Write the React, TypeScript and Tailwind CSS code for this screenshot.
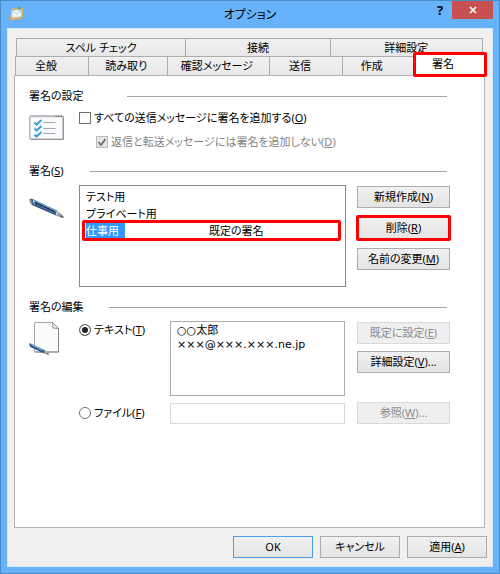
import React, { useState } from 'react';
import clsx from 'clsx';

const BACK_TABS = [
  { label: 'スペル チェック', width: 'grow-[170]' },
  { label: '接続', width: 'grow-[145]' },
  { label: '詳細設定', width: 'grow-[153]' },
];

const FRONT_TABS = [
  { label: '全般', width: 'grow-[73]', inset: 'pr-3' },
  { label: '読み取り', width: 'grow-[79]', inset: 'pr-1' },
  { label: '確認メッセージ', width: 'grow-[102]', inset: 'pr-1' },
  { label: '送信', width: 'grow-[72]', inset: 'pr-3' },
  { label: '作成', width: 'grow-[71]', inset: 'pr-3' },
  { label: '署名', width: 'grow-[73]', inset: 'pr-3' },
];

const SIGNATURES = [
  { name: 'テスト用', note: '' },
  { name: 'プライベート用', note: '' },
  { name: '仕事用', note: '既定の署名' },
];

const Label: React.FC<{ text: string; accessKey?: string; tail?: string }> = ({ text, accessKey, tail }) => (
  <span className="whitespace-nowrap">
    {text}
    {accessKey && <>(<u className="underline-offset-1">{accessKey}</u>)</>}
    {tail}
  </span>
);

type PushButtonProps = {
  text: string;
  accessKey?: string;
  tail?: string;
  disabled?: boolean;
  primary?: boolean;
  marked?: boolean;
  className?: string;
};

const PushButton: React.FC<PushButtonProps> = ({ text, accessKey, tail, disabled, primary, marked, className }) => (
  <button
    type="button"
    disabled={disabled}
    className={clsx(
      'relative flex h-[22px] items-center justify-center border',
      disabled
        ? 'border-[#d9d9d9] bg-[#efefef] text-[#8b8b8b]'
        : 'bg-linear-to-b from-[#f1f1f1] to-[#e4e4e4] text-black',
      !disabled && (primary ? 'border-[#4aa0f0]' : 'border-[#acacac]'),
      className
    )}
  >
    <Label text={text} accessKey={accessKey} tail={tail} />
    {marked && <Marker className="-inset-x-0.5 -inset-y-[3px]" />}
  </button>
);

/* Red frame that points out a control */
const Marker: React.FC<{ className: string }> = ({ className }) => (
  <span className={clsx('pointer-events-none absolute rounded-xs border-3 border-[#ff0000]', className)}></span>
);

const Heading: React.FC<{ width: string; children: React.ReactNode }> = ({ width, children }) => (
  <div className="mr-[3px] flex h-4 items-center">
    <h2 className={clsx('shrink-0', width)}>{children}</h2>
    <div className="h-px flex-1 bg-[#a5a5a5]"></div>
  </div>
);

const TitleIcon = () => (
  <svg width="15" height="15" viewBox="0 0 15 15">
    <path d="M3 2.5 9 1.500l5 .5v8.500l-2 2.500H3L1 12z" fill="#d9b46a" />
    <path d="M2.500 4.500 12 3.500l.5 7-9.500 1.500z" fill="#eef7fd" stroke="#9cc9e6" strokeWidth=".7" />
    <path d="m3 5 4.500 3L12 4" fill="none" stroke="#8fc0e0" strokeWidth=".8" />
    <path d="M.5 13 2 10.500l2 1.500 8-.5v1.500L3 14z" fill="#edb04c" />
    <path d="M8 1h3l1.500 2-3 .5z" fill="#5ea868" />
  </svg>
);

const ChecklistIcon = () => (
  <svg width="36" height="26" viewBox="0 0 36 26">
    <rect x=".8" y=".8" width="33.500" height="23.500" rx="1" fill="#fafafa" stroke="#a9a9ad" strokeWidth="1.300" />
    <path d="M2 24.300h32.300V3" fill="none" stroke="#8c8c90" strokeWidth="1" />
    <path d="M2 1.500h32" stroke="#b9bcc4" strokeWidth="1.500" />
    <path d="M26.500 1.500h1.200m1.300 0h1.200m1.300 0h1.200" stroke="#50555f" strokeWidth="1.200" />
    <path d="m5.500 7.500 2 2L12.500 5M5.500 13.500l2 2 5-4.500M5.500 19.500l2 2 5-4.500" fill="none" stroke="#3b9fe0" strokeWidth="2" />
    <path d="M14.500 7.500h12M14.500 13.500h12M14.500 18.500h12" stroke="#a3a9bd" strokeWidth="1.200" />
  </svg>
);

const PenShape = () => (
  <>
    <path d="M.5 1 3 .8 28 12.500l2 4.500-3 .5L3 7 .8 4z" fill="#2f5276" />
    <path d="M5 2.800 27.500 13.500" stroke="#78aedb" strokeWidth="1.700" />
    <path d="M8 6.500 26 15" stroke="#4b83b5" strokeWidth="1.300" />
    <path d="M6 4.200 26 13.800" stroke="#142338" strokeWidth="1.200" />
    <path d="M.8 1.200 3 5.500" stroke="#8fa3b3" strokeWidth="1.500" />
    <path d="m4 1.500 1.500 5" stroke="#c9d9e6" strokeWidth="1" />
    <path d="m27.500 12.300 6 4.700 1 2.500-2.500.3-5.500-2.500z" fill="#9aa0a3" />
    <path d="m28.500 13.500-1 3.500" stroke="#d9e0e4" strokeWidth="1.200" />
    <path d="m31.500 17.500 3 2" stroke="#55595c" strokeWidth="1.300" />
  </>
);

const PenIcon = () => (
  <svg width="36" height="22" viewBox="0 0 36 22">
    <PenShape />
  </svg>
);

const PageIcon = () => (
  <svg width="33" height="35" viewBox="0 0 33 35">
    <path d="M5.500 1.500h18l6 6v23.500h-24z" fill="#fbfbfb" stroke="#a6a6a6" strokeWidth="1" />
    <path d="M6 31h23.500V7" fill="none" stroke="#858585" strokeWidth="1" />
    <path d="m23.500 1.500.5 5.500 5.500.5z" fill="#eeeeee" stroke="#8f8f8f" strokeWidth="1" />
    <g transform="translate(0 22) scale(.58 .6)">
      <PenShape />
      <path d="m2 3.500 24 11.500" stroke="#2b5c8c" strokeWidth="3" />
      <path d="m5 3 18 9" stroke="#8fbde2" strokeWidth="1.500" />
    </g>
  </svg>
);

const App: React.FC = () => {
  const [addToAll, setAddToAll] = useState(false);
  const [source, setSource] = useState('text');
  const [selected, setSelected] = useState('仕事用');
  const [body, setBody] = useState('○○太郎\n×××@×××.×××.ne.jp');

  return (
    <div className="flex min-h-screen flex-col border border-[#4a8ac6] bg-[#66b3fc] px-1.5 pb-1.5 font-['Noto_Sans','Noto_Sans_CJK_JP',sans-serif] text-[11px] leading-4 text-black [font-feature-settings:'palt']">
      {/* Title bar */}
      <header className="grid h-[27px] grid-cols-[1fr_auto_1fr] items-start">
        <div className="pt-[5px] pl-0.5">
          <TitleIcon />
        </div>
        <h1 className="pt-1 text-[12px] leading-5">オプション</h1>
        <div className="flex justify-end">
          <button type="button" aria-label="ヘルプ" className="h-[18px] w-6 text-[13px] leading-[18px] font-bold">
            ?
          </button>
          <button type="button" aria-label="閉じる" className="flex h-[18px] w-[41px] items-center justify-center bg-[#c75050]">
            <svg width="8" height="8" viewBox="0 0 8 8">
              <path d="m1 1 6 6m0-6-6 6" stroke="#fff" strokeWidth="1.600" />
            </svg>
          </button>
        </div>
      </header>

      <main className="flex flex-1 flex-col border border-[#d5e6f5] bg-[#f0f0f0] pt-[9px] pr-[5px] pb-2 pl-1.5">
        {/* Tabs */}
        <div role="tablist" className="mr-0.5 flex flex-col">
          <div className="mr-0.5 ml-0.5 flex h-[18px] border-t border-r border-[#acacac]">
            {BACK_TABS.map(tab => (
              <button
                key={tab.label}
                type="button"
                role="tab"
                className={clsx('basis-0 border-l border-[#acacac] bg-linear-to-b from-[#f1f1f1] to-[#e8e8e8]', tab.width)}
              >
                {tab.label}
              </button>
            ))}
          </div>
          <div className="ml-px flex h-[19px]">
            {FRONT_TABS.map(tab => {
              const active = tab.label === '署名';
              return (
                <button
                  key={tab.label}
                  type="button"
                  role="tab"
                  aria-selected={active}
                  className={clsx(
                    'relative min-w-0 basis-0 whitespace-nowrap',
                    active
                      ? 'bg-white pb-1'
                      : 'border-t border-l border-[#acacac] bg-linear-to-b from-[#f1f1f1] to-[#e8e8e8]',
                    tab.width
                  )}
                >
                  {active && <Marker className="-top-1 -right-0.5 -bottom-0.5 left-0 bg-white" />}
                  <span className={clsx('relative block', tab.inset)}>{tab.label}</span>
                </button>
              );
            })}
          </div>
        </div>

        {/* Signature page */}
        <div role="tabpanel" className="mr-0.5 flex-1 border border-[#b4b4b4] bg-white pt-3 pr-[34px] pl-3.5">
          <section>
            <Heading width="w-[98px]">署名の設定</Heading>
            <div className="mt-1.5 grid grid-cols-[50px_1fr]">
              <div className="pt-[5px]">
                <ChecklistIcon />
              </div>
              <div className="flex flex-col gap-2">
                <label className="flex h-4 items-center gap-[3px]">
                  <input
                    type="checkbox"
                    checked={addToAll}
                    onChange={e => setAddToAll(e.target.checked)}
                    className="size-3 appearance-none border border-[#707070] bg-white checked:bg-[#3399ff]"
                  />
                  <Label text="すべての送信メッセージに署名を追加する" accessKey="O" />
                </label>
                <label className="ml-[17px] flex h-4 items-center gap-[3px] text-[#838383]">
                  <span className="relative flex size-3">
                    <input
                      type="checkbox"
                      defaultChecked
                      disabled
                      className="size-3 appearance-none border border-[#bcbcbc] bg-[#e6e6e6]"
                    />
                    <svg className="absolute inset-0" width="12" height="12" viewBox="0 0 12 12">
                      <path d="m2.500 6 2.500 3 4.500-6" fill="none" stroke="#707070" strokeWidth="1.800" />
                    </svg>
                  </span>
                  <Label text="返信と転送メッセージには署名を追加しない" accessKey="D" />
                </label>
              </div>
            </div>
          </section>

          <section className="mt-[13px]">
            <Heading width="w-[61px]">
              <Label text="署名" accessKey="S" />
            </Heading>
            <div className="mt-1.5 grid grid-cols-[50px_1fr_93px]">
              <div className="pt-[13px]">
                <PenIcon />
              </div>
              <ul role="listbox" aria-label="署名" className="mr-[11px] h-[102px] border border-[#828790] px-1.5 pt-0.5">
                {SIGNATURES.map(item => (
                  <li
                    key={item.name}
                    role="option"
                    aria-selected={item.name === selected}
                    onClick={() => setSelected(item.name)}
                    className="relative grid h-[17px] grid-cols-[123px_1fr] items-center"
                  >
                    <span>
                      <span className={clsx(item.name === selected && 'inline-block w-[39px] bg-[#3399ff] text-white')}>
                        {item.name}
                      </span>
                    </span>
                    <span>{item.note}</span>
                    {item.note && <Marker className="-inset-y-0.5 -right-0.5 -left-1" />}
                  </li>
                ))}
              </ul>
              <div className="flex flex-col gap-[9px] pt-px">
                <PushButton text="新規作成" accessKey="N" />
                <PushButton text="削除" accessKey="R" marked />
                <PushButton text="名前の変更" accessKey="M" />
              </div>
            </div>
          </section>

          <section className="mt-3">
            <Heading width="w-[80px]">署名の編集</Heading>
            <div className="mt-1.5 grid grid-cols-[50px_91px_1fr_93px]">
              <div>
                <PageIcon />
              </div>
              <label className="flex h-[18px] items-center gap-[3px]">
                <input
                  type="radio"
                  name="source"
                  checked={source === 'text'}
                  onChange={() => setSource('text')}
                  className="size-3 appearance-none rounded-full border border-[#707070] bg-white checked:bg-[#222222] checked:shadow-[inset_0_0_0_2px_white]"
                />
                <Label text="テキスト" accessKey="T" />
              </label>
              <textarea
                aria-label="署名テキスト"
                value={body}
                onChange={e => setBody(e.target.value)}
                className="mr-3 h-[75px] resize-none border border-[#abadb3] px-1.5 pt-0.5 font-['DejaVu_Sans','Noto_Sans_CJK_JP',sans-serif] leading-[14px]"
              />
              <div className="flex flex-col gap-[7px] pt-px">
                <PushButton text="既定に設定" accessKey="E" disabled />
                <PushButton text="詳細設定" accessKey="V" tail="..." />
              </div>
            </div>
            <div className="mt-1.5 grid grid-cols-[91px_1fr_93px] items-center pl-[50px]">
              <label className="flex h-[22px] items-center gap-[3px]">
                <input
                  type="radio"
                  name="source"
                  checked={source === 'file'}
                  onChange={() => setSource('file')}
                  className="size-3 appearance-none rounded-full border border-[#707070] bg-white checked:bg-[#222222] checked:shadow-[inset_0_0_0_2px_white]"
                />
                <Label text="ファイル" accessKey="F" />
              </label>
              <input type="text" aria-label="ファイル" disabled className="mr-3 h-[21px] min-w-0 border border-[#d9d9d9] bg-white px-1.5" />
              <PushButton text="参照" accessKey="W" tail="..." disabled />
            </div>
          </section>
        </div>

        {/* Dialog buttons */}
        <footer className="mt-2 flex justify-end gap-[7px]">
          <PushButton text="OK" primary className="w-20" />
          <PushButton text="キャンセル" className="w-20" />
          <PushButton text="適用" accessKey="A" className="w-20" />
        </footer>
      </main>
    </div>
  );
};

export default App;
